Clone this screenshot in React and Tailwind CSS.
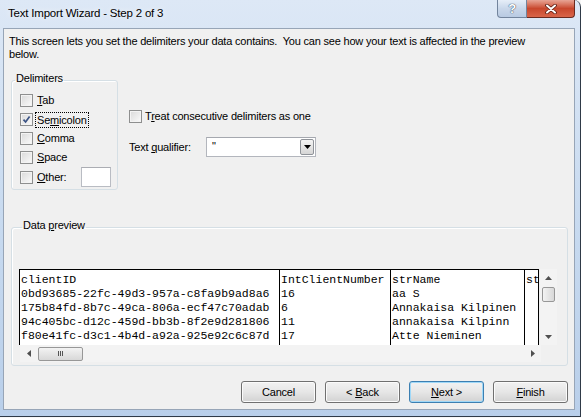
import React from "react"

const rows = [
  ["clientID", "IntClientNumber", "strName", "str"],
  ["0bd93685-22fc-49d3-957a-c8fa9b9ad8a6", "16", "aa S", ""],
  ["175b84fd-8b7c-49ca-806a-ecf47c70adab", "6", "Annakaisa Kilpinen", ""],
  ["94c405bc-d12c-459d-bb3b-8f2e9d281806", "11", "annakaisa Kilpinn", ""],
  ["f80e41fc-d3c1-4b4d-a92a-925e92c6c87d", "17", "Atte Nieminen", ""],
]

const Check = ({ checked }) => (
  <span className="flex h-[13px] w-[13px] shrink-0 items-center justify-center border border-[#8e8f8f] bg-gradient-to-br from-[#d9d9d9] to-[#fbfbfb] shadow-[inset_0_0_0_1px_#f3f3f3]">
    {checked && (
      <svg width="9" height="9" viewBox="0 0 9 9">
        <path d="M1.5 4.6 L3.6 7 L7.6 1.4" fill="none" stroke="#3b5384" strokeWidth="1.7" />
      </svg>
    )}
  </span>
)

const Arrow = ({ dir }) => {
  const pts = {
    up: "0,4 3.5,0 7,4",
    down: "0,0 7,0 3.5,4",
    left: "4,0 4,7 0,3.5",
    right: "0,0 4,3.5 0,7",
  }[dir]
  const vertical = dir === "up" || dir === "down"
  return (
    <svg width={vertical ? 7 : 4} height={vertical ? 4 : 7} viewBox={vertical ? "0 0 7 4" : "0 0 4 7"}>
      <polygon points={pts} fill="#4f4f4f" />
    </svg>
  )
}

const Button = ({ children, primary }) => (
  <button
    className={`flex h-[22px] w-[75px] items-center justify-center rounded-[3px] border bg-gradient-to-b from-[#f2f2f2] via-[#e6e6e6] to-[#d2d2d2] text-black ${
      primary ? "border-[#3c7fb1] shadow-[inset_0_0_0_1px_#9fd8f8]" : "border-[#707070] shadow-[inset_0_0_0_1px_#fbfbfb]"
    }`}
  >
    <span className="whitespace-pre">{children}</span>
  </button>
)

const Delim = ({ label, checked, focus, children }) => (
  <div className="flex h-[19px] items-center gap-[4px] pl-[8px]">
    <Check checked={checked} />
    <span className={focus ? "-mx-[2px] border border-dotted border-black px-[1px] leading-[14px]" : ""}>{label}</span>
    {children}
  </div>
)

export default function App() {
  return (
    <div className="flex h-[418px] w-[585px] overflow-hidden bg-[#f7f7f7] font-['Liberation_Sans',Arial,sans-serif] text-[11px] tracking-[-0.2px] text-black">
      <div className="h-[417px] w-[581px] shrink-0 rounded-tr-[7px] border-r border-b border-[#2f3a48] bg-gradient-to-b from-[#dde8f6] via-[#c9dbf0] to-[#b9cfea]">
        {/* title bar */}
        <div className="flex h-[28px] items-start">
          <div className="pl-[8px] pt-[6px] leading-[14px] text-[11.5px] [text-shadow:0_0_6px_#ffffff]">
            Text Import Wizard - Step 2 of 3
          </div>
          <div className="ml-auto mr-[5px] flex">
            <div className="flex h-[18px] w-[30px] items-center justify-center rounded-bl-[4px] border border-t-0 border-[#72849d] bg-gradient-to-b from-[#e6eef8] via-[#c9d7ea] to-[#b8cae2] text-[13px] font-bold text-white [text-shadow:0_0_1px_#2d3e58,0_0_1px_#2d3e58]">
              ?
            </div>
            <div className="flex h-[18px] w-[48px] items-center justify-center rounded-br-[4px] border border-t-0 border-l-0 border-[#6b2a1f] bg-gradient-to-b from-[#e7a495] via-[#c8472d] to-[#d9654a]">
              <svg width="12" height="10" viewBox="0 0 12 10">
                <path d="M2 1.5 L10 8.5 M10 1.5 L2 8.5" stroke="#5a1a10" strokeWidth="3.6" strokeLinecap="round" />
                <path d="M2 1.5 L10 8.5 M10 1.5 L2 8.5" stroke="#ffffff" strokeWidth="2" strokeLinecap="round" />
              </svg>
            </div>
          </div>
        </div>

        {/* client area */}
        <div className="ml-[3px] flex h-[382px] w-[572px] flex-col border border-[#97a5b7] bg-[#f0f0f0]">
          <p className="pl-[5px] pt-[6px] leading-[13px]">
            This screen lets you set the delimiters your data contains.&nbsp; You can see how your text is affected in the preview
            <br />
            below.
          </p>

          <div className="mt-[11px] flex items-start">
            <fieldset className="ml-[7px] w-[107px] rounded-[3px] border border-[#d5dfe5] pt-[2px] pb-[2px] shadow-[inset_1px_1px_0_#ffffff]">
              <legend className="ml-[3px] px-[1px] pb-[4px] leading-[13px]">Delimiters</legend>
              <Delim label={<><u>T</u>ab</>} />
              <Delim label={<>Se<u>m</u>icolon</>} checked focus />
              <Delim label={<><u>C</u>omma</>} />
              <Delim label={<><u>S</u>pace</>} />
              <div className="flex h-[20px] items-center gap-[4px] pl-[8px]">
                <Check />
                <span className="w-[40px]">
                  <u>O</u>ther:
                </span>
                <div className="h-[20px] w-[30px] border border-[#b9bcc3] border-t-[#abadb3] bg-white" />
              </div>
            </fieldset>

            <div className="ml-[11px] pt-[38px]">
              <div className="flex h-[13px] items-center gap-[3px]">
                <Check />
                <span>
                  T<u>r</u>eat consecutive delimiters as one
                </span>
              </div>
              <div className="mt-[14px] flex h-[20px] items-center">
                <span className="w-[77px]">
                  Text <u>q</u>ualifier:
                </span>
                <div className="flex h-[20px] w-[110px] items-stretch border border-[#b3b6bd] border-t-[#a5a8af] bg-white">
                  <span className="flex-1 pl-[5px] leading-[16px]">"</span>
                  <div className="m-[1px] flex w-[14px] items-center justify-center rounded-[2px] border border-[#8f9399] bg-gradient-to-b from-[#f4f4f4] to-[#d6d6d6]">
                    <svg width="7" height="4" viewBox="0 0 7 4">
                      <polygon points="0,0 7,0 3.5,4" fill="#000000" />
                    </svg>
                  </div>
                </div>
              </div>
            </div>
          </div>

          <fieldset className="mt-[29px] ml-[7px] w-[557px] rounded-[3px] border border-[#d5dfe5] pt-[33px] pb-[3px] pl-[7px] shadow-[inset_1px_1px_0_#ffffff]">
            <legend className="ml-[3px] px-[1px] pb-[4px] leading-[13px]">
              Data <u>p</u>review
            </legend>
            <div className="flex">
              <div className="flex h-[76px] w-[520px] overflow-hidden border-x border-t border-black bg-white font-['Liberation_Mono','Courier_New',monospace] text-[11.5px] leading-[14px] tracking-normal">
                {[260, 111, 134, 20].map((w, c) => (
                  <div
                    key={c}
                    style={{ width: w }}
                    className={`shrink-0 overflow-hidden whitespace-nowrap pt-[3px] pl-[1px] ${c < 3 ? "border-r border-black" : ""}`}
                  >
                    {rows.map((r, i) => (
                      <div key={i} className="h-[14px]">
                        {r[c]}
                      </div>
                    ))}
                  </div>
                ))}
              </div>
              <div className="ml-[1px] flex h-[76px] w-[17px] flex-col bg-[#f3f3f3]">
                <div className="flex h-[17px] items-center justify-center">
                  <Arrow dir="up" />
                </div>
                <div className="mx-[2px] mt-[1px] h-[15px] rounded-[2px] border border-[#979797] bg-gradient-to-r from-[#f3f3f3] to-[#d8d8d8]" />
                <div className="flex-1" />
                <div className="flex h-[17px] items-center justify-center">
                  <Arrow dir="down" />
                </div>
              </div>
            </div>
            <div className="ml-[1px] flex h-[17px] w-[521px] items-center bg-[#f3f3f3]">
              <div className="flex h-[17px] w-[17px] items-center justify-center">
                <Arrow dir="left" />
              </div>
              <div className="ml-[1px] flex h-[14px] w-[45px] items-center justify-center gap-[1px] rounded-[2px] border border-[#979797] bg-gradient-to-b from-[#f3f3f3] to-[#d8d8d8]">
                <span className="h-[5px] w-[1px] bg-[#555]" />
                <span className="h-[5px] w-[1px] bg-[#555]" />
                <span className="h-[5px] w-[1px] bg-[#555]" />
              </div>
              <div className="flex-1" />
              <div className="flex h-[17px] w-[17px] items-center justify-center">
                <Arrow dir="right" />
              </div>
            </div>
          </fieldset>

          <div className="mt-[15px] flex justify-end gap-[9px] pr-[6px]">
            <Button>Cancel</Button>
            <Button>
              {"< "}
              <u>B</u>ack
            </Button>
            <Button primary>
              <u>N</u>ext{" >"}
            </Button>
            <Button>
              <u>F</u>inish
            </Button>
          </div>
        </div>
      </div>
      <div className="flex-1 bg-white" />
    </div>
  )
}
